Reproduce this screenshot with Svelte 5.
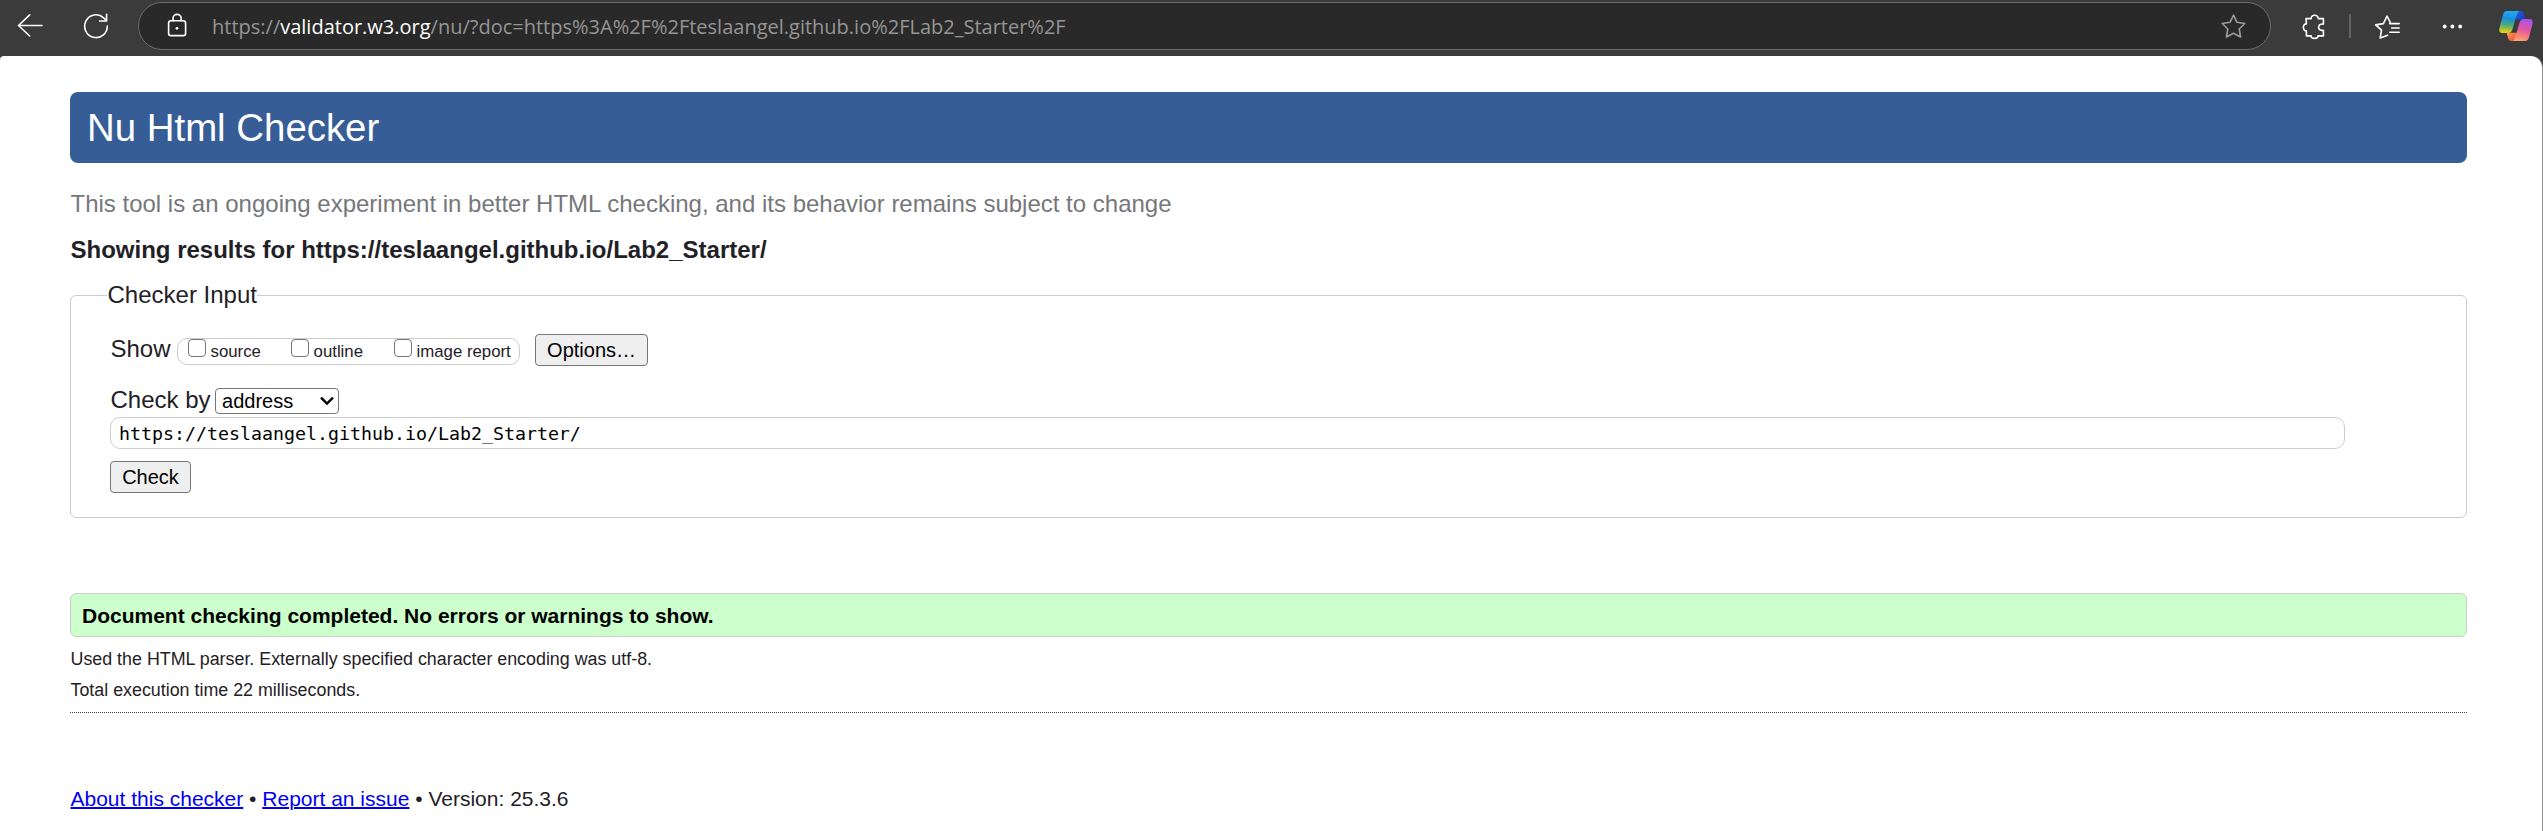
<script>
  let address = $state('https://teslaangel.github.io/Lab2_Starter/');
  const views = [
    { label: 'source', width: 103 },
    { label: 'outline', width: 103 },
    { label: 'image report', width: 124 }
  ];
</script>

<div class="window">
  <header class="toolbar">
    <svg class="icon back" width="28" height="28" viewBox="16 12 28 28"><path d="M42 25.5H18.6M29.7 14.8L18.5 25.5L29.7 36" /></svg>
    <svg class="icon reload" width="28" height="28" viewBox="82 12 28 28"><path d="M107.3 26A11.3 11.4 0 1 1 103.6 17.8L106.4 20.6M106.6 14.2V21H99.6" /></svg>

    <div class="address">
      <svg class="icon lock" width="24" height="28" viewBox="165 12 24 28">
        <rect x="168.6" y="20.8" width="17" height="14.8" rx="2.4" />
        <path d="M173 20.8V18.5a4.1 4.1 0 0 1 8.2 0V20.8" />
        <circle cx="177" cy="28.3" r="1.4" class="dot" />
      </svg>
      <div class="url"><span class="scheme">https://</span><span class="host">validator.w3.org</span><span class="path">/nu/?doc=https%3A%2F%2Fteslaangel.github.io%2FLab2_Starter%2F</span></div>
      <svg class="icon star" width="28" height="28" viewBox="2219 12 28 28"><path d="M2233.5 15.2L2237 22.3L2244.8 23.5L2239.2 29L2240.6 37L2233.5 33.3L2226.4 37L2227.8 29L2222.2 23.5L2230 22.3Z" /></svg>
    </div>

    <svg class="icon puzzle" width="28" height="28" viewBox="2300 12 28 28">
      <path d="M2306 18.6H2311.2C2310.9 16.7 2312.4 15.3 2314.6 15.3C2316.8 15.3 2318.4 16.7 2318.2 18.6H2323.4V24.1C2320.4 23.7 2318.6 25 2318.6 27.2C2318.6 29.4 2320.4 30.8 2323.4 30.3V35.9H2318C2318.2 37.5 2316.8 38.4 2314.4 38.4C2312.2 38.4 2310.8 37.4 2311.1 35.9H2306.4V30.8C2304.6 30.9 2303.4 29.5 2303.4 27.3C2303.4 25.1 2304.6 23.8 2306.4 23.9Z" />
    </svg>
    <span class="divider"></span>
    <svg class="icon favorites" width="28" height="28" viewBox="2373 12 28 28">
      <path d="M2387.6 35.2L2380.2 38L2381.5 30.2L2375.7 24.9L2383.4 23.6L2387 16.2L2390.2 22.2M2389.6 23.6H2399.2M2391.6 28H2399.2M2389.8 32.3H2399.2" />
    </svg>
    <svg class="icon more" width="24" height="28" viewBox="2440 12 24 28">
      <circle cx="2444.7" cy="26.5" r="1.9" /><circle cx="2452.4" cy="26.5" r="1.9" /><circle cx="2460.2" cy="26.5" r="1.9" />
    </svg>
    <svg class="copilot" width="36" height="32" viewBox="0 0 36 32">
      <defs>
        <linearGradient id="cool" x1="0.4" y1="0" x2="0.3" y2="1">
          <stop offset="0" stop-color="#22a9f5" /><stop offset="0.35" stop-color="#168fd8" /><stop offset="0.65" stop-color="#55ad72" /><stop offset="1" stop-color="#f2d20d" />
        </linearGradient>
        <linearGradient id="warm" x1="0.7" y1="0" x2="0.4" y2="1">
          <stop offset="0" stop-color="#a650ee" /><stop offset="0.5" stop-color="#e4589f" /><stop offset="1" stop-color="#ffa365" />
        </linearGradient>
        <linearGradient id="fold" x1="0" y1="0" x2="1" y2="1">
          <stop offset="0" stop-color="#1e62e8" /><stop offset="1" stop-color="#173cc0" />
        </linearGradient>
        <linearGradient id="base" x1="0" y1="0" x2="1" y2="1">
          <stop offset="0" stop-color="#ffa044" /><stop offset="1" stop-color="#ed4340" />
        </linearGradient>
      </defs>
      <path d="M16 1H22.6Q25 1 25.8 3.6L27.4 9.4H23Q20 9.4 17.4 9.4Z" fill="url(#fold)" />
      <path d="M19.8 31H13.5Q11 31 10.2 28.4L8.6 22.8H13Q16 22.8 18.6 22.8Z" fill="url(#base)" />
      <path d="M8.8 1H21.5Q19.6 2 18.7 5L14.4 19.5Q13.3 23 10 23H4.5Q0.2 23 1.6 17.5L4.9 5Q6 1 8.8 1Z" fill="url(#cool)" />
      <path d="M27.2 31H14.5Q16.4 30 17.3 27L21.6 12.5Q22.7 9 26 9H31.5Q35.8 9 34.4 14.5L31.1 27Q30 31 27.2 31Z" fill="url(#warm)" />
    </svg>
  </header>

  <main class="page">
    <h1>Nu Html Checker</h1>
    <p class="notice">This tool is an ongoing experiment in better HTML checking, and its behavior remains subject to change</p>
    <h2>Showing results for https://teslaangel.github.io/Lab2_Starter/</h2>

    <fieldset class="checker">
      <legend>Checker Input</legend>
      <div class="show-row">
        <span>Show</span>
        <div class="views">
          {#each views as view}
            <label style:width="{view.width}px"><input type="checkbox" /><span>{view.label}</span></label>
          {/each}
        </div>
        <button class="options">Options…</button>
      </div>
      <div class="method-row">
        <span>Check by</span>
        <div class="method">
          <select><option>address</option></select>
          <svg width="16" height="10" viewBox="0 0 16 10"><path d="M2 1.6L8 7.6L14 1.6" /></svg>
        </div>
      </div>
      <input class="doc" type="text" bind:value={address} spellcheck="false" />
      <button class="check">Check</button>
    </fieldset>

    <p class="success">Document checking completed. No errors or warnings to show.</p>
    <p class="detail">Used the HTML parser. Externally specified character encoding was utf-8.</p>
    <p class="detail">Total execution time 22 milliseconds.</p>
    <hr />
    <footer><a href="#about">About this checker</a> • <a href="#issue">Report an issue</a> • Version: 25.3.6</footer>
  </main>
</div>

<style>
  :global(body) { margin: 0; background: #3b3b3b; overflow: hidden; }
  * { box-sizing: border-box; }
  .window { width: 2543px; height: 831px; background: #3b3b3b; font-family: "Liberation Sans", Arial, sans-serif; display: flex; flex-direction: column; }

  .toolbar { height: 56px; flex: none; display: flex; align-items: flex-start; padding: 2px 9px 0 16px; }
  .icon { flex: none; margin-top: 10px; fill: none; stroke: #fff; stroke-width: 1.6; stroke-linejoin: round; stroke-linecap: round; }
  .reload { margin-left: 38px; }
  .address { margin-left: 28px; width: 2133px; height: 48px; flex: none; display: flex; align-items: flex-start; background: #292929; border: 1.5px solid #6b6b6b; border-radius: 24px; padding: 0 23px 0 26px; }
  .address .icon { margin-top: 9px; }
  .dot { fill: #fff; stroke: none; }
  .url { flex: 1; margin-left: 23px; font: 20px/47px "Open Sans", "Noto Sans", sans-serif; color: #959595; white-space: nowrap; }
  .host { color: #fff; }
  .icon.star { stroke: #9c9c9c; }
  .puzzle { margin-left: 29px; }
  .divider { width: 2px; height: 24px; margin: 12px 0 0 21px; background: #646464; }
  .favorites { margin-left: 22px; }
  .icon.more { margin-left: 39px; fill: #fff; stroke: none; }
  .copilot { flex: none; margin: 8px 0 0 34px; }

  .page { flex: 1; background: #fff; border-right: 1px solid #8e8e8e; border-radius: 4px 12px 0 0; padding: 36px 75px 0 70px; color: #1f2126; }
  h1 { margin: 0; height: 71px; padding: 0 17px; border-radius: 8px; background: #365d95; color: #fff; font-weight: 400; font-size: 38.4px; line-height: 72px; }
  .notice { margin: 26px 0 0; padding-left: 0.5px; font-size: 24px; line-height: 30px; color: #76777a; }
  h2 { margin: 16px 0 0; padding-left: 0.5px; font-size: 24px; line-height: 30px; }

  .checker { margin: 16px 0 0; height: 237px; padding: 25px 39px 0; border: 1px solid #ccc; border-radius: 6px; min-width: 0; font-size: 24px; line-height: 28px; }
  legend { padding: 0; margin-left: -3px; padding-left: 0.5px; }
  .show-row { display: flex; align-items: baseline; height: 32px; padding-left: 0.5px; }
  .views { display: flex; width: 343px; height: 27px; margin-left: 6.5px; padding-left: 9.5px; border: 1px solid #ccc; border-radius: 10px; font-size: 16.8px; line-height: 26px; }
  .views label { display: flex; flex: none; align-items: baseline; white-space: nowrap; }
  .views input { appearance: none; width: 18px; height: 18px; margin: 0 5px 0 0; align-self: flex-start; border: 1.5px solid #767676; border-radius: 4px; background: #fff; }
  button { height: 32px; padding: 0; border: 1px solid #767676; border-radius: 4px; background: #efefef; color: #000; font: 20px/28px "Liberation Sans", Arial, sans-serif; }
  .options { width: 113px; margin-left: 15px; padding-bottom: 1px; }
  .method-row { display: flex; align-items: baseline; margin-top: 20px; height: 31px; padding-left: 0.5px; }
  .method { display: grid; width: 124px; height: 26px; margin-left: 4.5px; }
  .method > * { grid-area: 1 / 1; }
  select { appearance: none; height: 26px; padding: 0 6px; border: 1px solid #767676; border-radius: 4px; background: #fff; color: #000; font: 20px/24px "Liberation Sans", Arial, sans-serif; }
  .method svg { place-self: center end; margin-right: 4px; fill: none; stroke: #000; stroke-width: 2.4; pointer-events: none; }
  .doc { display: block; width: 2235px; height: 32px; padding: 0 8px; border: 1px solid #ccc; border-radius: 10px; color: #000; font: 18.27px/28px "DejaVu Sans Mono", monospace; }
  .check { display: block; width: 81px; margin-top: 12px; }

  .success { margin: 75px 0 0; height: 44px; padding: 0 11px; border: 1px solid #ccc; border-radius: 6px; background: #cfc; color: #000; font-size: 21px; font-weight: 700; line-height: 43px; }
  .detail { margin: 6px 0 0; padding-left: 0.5px; font-size: 17.85px; line-height: 25px; }
  .success + .detail { margin-top: 10px; }
  hr { margin: 9px 0 0; border: 0; border-top: 1px dotted #444; }
  footer { margin-top: 71px; padding-left: 0.5px; font-size: 21px; line-height: 30px; }
  a { color: #00e; text-decoration-thickness: 2px; }
</style>
